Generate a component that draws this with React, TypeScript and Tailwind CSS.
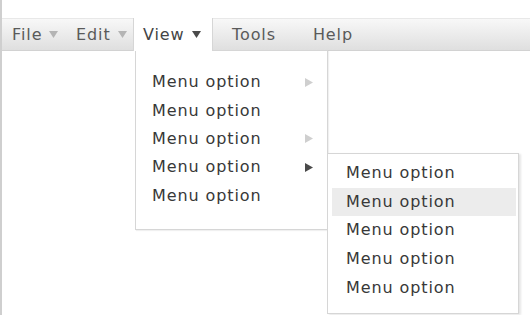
import React from "react";

const Down = ({ dark }: { dark?: boolean }) => (
  <svg width="9" height="7" viewBox="0 0 9 7" className={dark ? "fill-[#4a4a4a]" : "fill-[#b4b4b4]"}>
    <polygon points="0,0 9,0 4.5,7" />
  </svg>
);

const Right = ({ dark }: { dark?: boolean }) => (
  <svg width="8" height="9" viewBox="0 0 8 9" className={dark ? "fill-[#4a4a4a]" : "fill-[#cfcfcf]"}>
    <polygon points="0,0 8,4.5 0,9" />
  </svg>
);

const mainItems = [
  { sub: "light" },
  { sub: "" },
  { sub: "light" },
  { sub: "dark" },
  { sub: "" },
];

export default function App() {
  return (
    <div className="relative h-[315px] w-[530px] overflow-hidden border-l-2 border-[#cfcfcf] bg-white font-['DejaVu_Sans',sans-serif] text-[16px] tracking-[0.9px] text-[#383838]">
      {/* menu bar */}
      <div className="mt-[18px] flex h-[33px] items-stretch border-y border-t-[#e8e8e8] border-b-[#d2d2d2] bg-gradient-to-b from-[#f8f8f8] to-[#dfdfdf] pl-[10px] text-[#5a5a5a]">
        <div className="flex w-[64px] items-center gap-[7px]">
          <span>File</span>
          <Down />
        </div>
        <div className="flex w-[57px] items-center gap-[7px]">
          <span>Edit</span>
          <Down />
        </div>
        <div className="relative z-10 -mt-px -mb-px flex w-[80px] items-center gap-[7px] border-x border-[#d6d6d6] bg-white pl-[9px] text-[#444]">
          <span>View</span>
          <Down dark />
        </div>
        <div className="ml-[19px] flex items-center">Tools</div>
        <div className="ml-[37px] flex items-center">Help</div>
      </div>

      {/* view dropdown */}
      <div className="absolute left-[133px] top-[50px] h-[180px] w-[193px] border border-[#d6d6d6] bg-white pt-[17px] shadow-[1px_1px_1px_rgba(0,0,0,0.06)]">
        {mainItems.map((it, i) => (
          <div key={i} className="flex h-[28.4px] items-center justify-between pl-[16px] pr-[14px]">
            <span>Menu option</span>
            {it.sub && <Right dark={it.sub === "dark"} />}
          </div>
        ))}
      </div>

      {/* submenu */}
      <div className="absolute left-[325px] top-[153px] h-[161px] w-[192px] border border-[#d6d6d6] bg-white pt-[5px] pl-[4px] pr-[2px] shadow-[2px_1px_2px_rgba(0,0,0,0.1)]">
        {[0, 1, 2, 3, 4].map((i) => (
          <div
            key={i}
            className={`flex h-[28.6px] items-center pl-[14px] ${i === 1 ? "bg-[#ececec]" : ""}`}
          >
            Menu option
          </div>
        ))}
      </div>
    </div>
  );
}
